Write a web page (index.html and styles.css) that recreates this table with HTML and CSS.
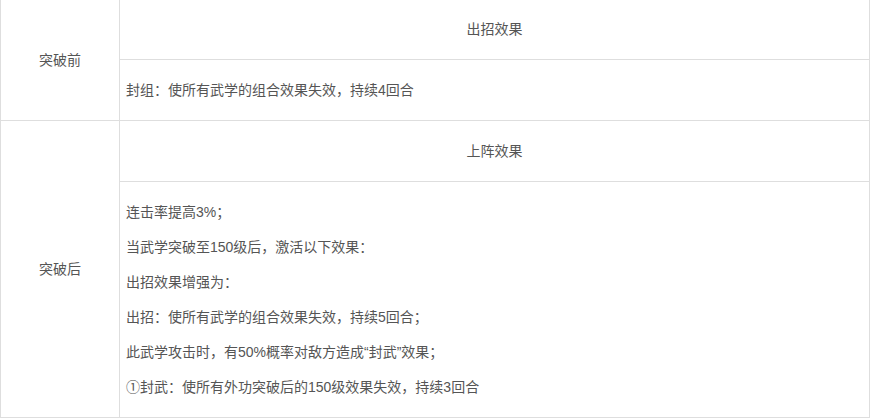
FILE: index.html
```html
<!DOCTYPE html>
<html lang="zh-CN">

<head>
  <meta charset="UTF-8" />
  <meta name="viewport" content="width=device-width, initial-scale=1.0" />
  <title>武学突破</title>
  <link rel="stylesheet" href="styles.css">
</head>

<body>
  <table class="skill-table">
    <tr>
      <td class="label" rowspan="2"><p>突破前</p></td>
      <td class="head"><p>出招效果</p></td>
    </tr>
    <tr>
      <td class="desc"><p>封组：使所有武学的组合效果失效，持续4回合</p></td>
    </tr>
    <tr>
      <td class="label" rowspan="2"><p>突破后</p></td>
      <td class="head"><p>上阵效果</p></td>
    </tr>
    <tr>
      <td class="desc desc-long">
        <p>连击率提高3%；</p>
        <p>当武学突破至150级后，激活以下效果：</p>
        <p>出招效果增强为：</p>
        <p>出招：使所有武学的组合效果失效，持续5回合；</p>
        <p>此武学攻击时，有50%概率对敌方造成“封武”效果；</p>
        <p>①封武：使所有外功突破后的150级效果失效，持续3回合</p>
      </td>
    </tr>
  </table>
</body>

</html>
```

FILE: styles.css
```css
body {
  margin: 0;
  background: #fff;
  font-family: "Liberation Sans", "Noto Sans CJK SC", sans-serif;
  font-size: 14px;
  color: #555;
}

.skill-table {
  width: 870px;
  margin-top: -2px;
  border-collapse: collapse;
}

.skill-table td {
  border: 1px solid #dedede;
  padding: 6px;
  vertical-align: middle;
}

.skill-table p {
  margin: 13px 0;
  line-height: 22px;
}

.label {
  width: 106px;
  text-align: center;
}

.head {
  text-align: center;
}

.desc {
  text-align: left;
}

.desc-long {
  padding-bottom: 8px;
}
```
